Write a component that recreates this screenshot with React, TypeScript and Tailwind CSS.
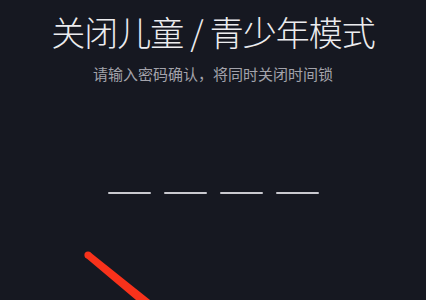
export default function App() {
  return (
    <div
      className="relative h-[300px] w-[426px] overflow-hidden bg-[#161821] text-center"
      style={{ fontFamily: '"Noto Sans CJK SC", "Noto Sans", sans-serif' }}
    >
      <h1 className="pt-[11px] text-[34px] font-light leading-[42px] tracking-[-1px] text-[#ececef]">
        关闭儿童<span className="mx-[7px]">/</span>青少年模式
      </h1>
      <p className="mt-[11px] text-[15px] leading-[20px] text-[#a3a3ab]">
        请输入密码确认，将同时关闭时间锁
      </p>
      <div className="mt-[108px] flex justify-center gap-[13px]">
        {[0, 1, 2, 3].map((i) => (
          <span key={i} className="block h-[2px] w-[43px] rounded-full bg-[#c9c9cf]" />
        ))}
      </div>
      {/* red arrow annotation */}
      <svg className="absolute left-0 top-0" width="426" height="300" viewBox="0 0 426 300">
        <path d="M85.5 257.5 L90.5 252.5 L150 300 L136 300 Z" fill="#f8321b" />
        <circle cx="88" cy="255" r="3.6" fill="#f8321b" />
      </svg>
    </div>
  );
}
